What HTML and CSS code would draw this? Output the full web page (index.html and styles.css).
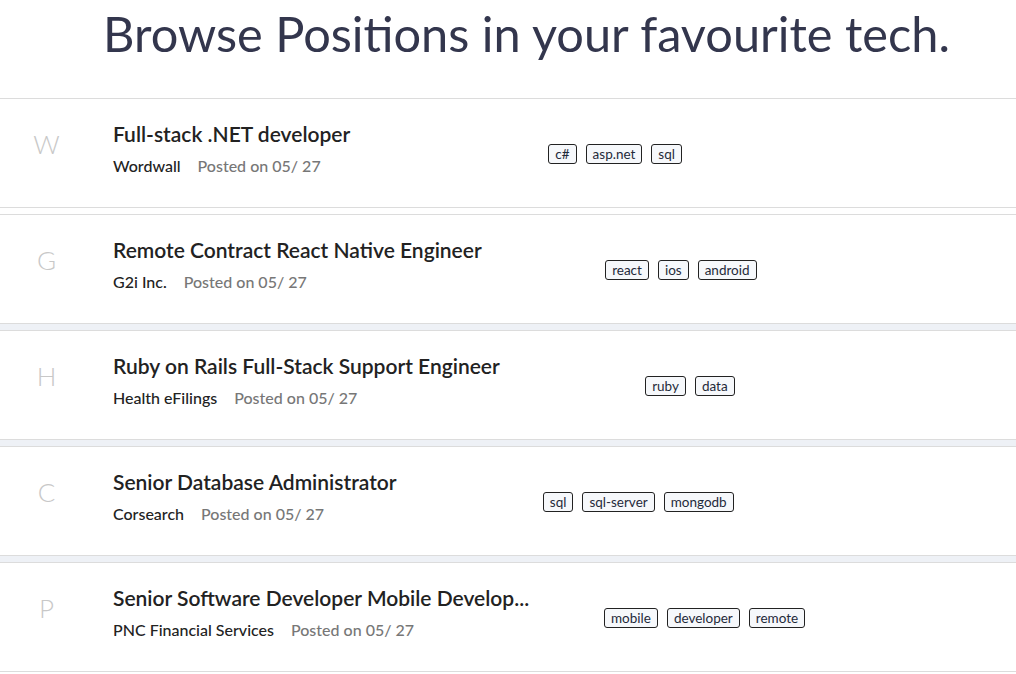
FILE: index.html
```html
<!DOCTYPE html>
<html lang="en">
<head>
<meta charset="utf-8">
<title>Browse Positions</title>
<link rel="stylesheet" href="styles.css">
</head>
<body>
<header class="hero">
  <h1 class="hero-title">Browse Positions in your favourite tech.</h1>
</header>
<main class="jobs">
  <article class="job job-first">
    <div class="job-avatar">W</div>
    <div class="job-info">
      <h2 class="job-title">Full-stack .NET developer</h2>
      <div class="job-meta"><span class="job-company">Wordwall</span><span class="job-date">Posted on 05/ 27</span></div>
    </div>
    <div class="job-tags"><span class="tag">c#</span><span class="tag">asp.net</span><span class="tag">sql</span></div>
  </article>
  <article class="job">
    <div class="job-avatar">G</div>
    <div class="job-info">
      <h2 class="job-title">Remote Contract React Native Engineer</h2>
      <div class="job-meta"><span class="job-company">G2i Inc.</span><span class="job-date">Posted on 05/ 27</span></div>
    </div>
    <div class="job-tags"><span class="tag">react</span><span class="tag">ios</span><span class="tag">android</span></div>
  </article>
  <article class="job">
    <div class="job-avatar">H</div>
    <div class="job-info">
      <h2 class="job-title">Ruby on Rails Full-Stack Support Engineer</h2>
      <div class="job-meta"><span class="job-company">Health eFilings</span><span class="job-date">Posted on 05/ 27</span></div>
    </div>
    <div class="job-tags"><span class="tag">ruby</span><span class="tag">data</span></div>
  </article>
  <article class="job">
    <div class="job-avatar">C</div>
    <div class="job-info">
      <h2 class="job-title">Senior Database Administrator</h2>
      <div class="job-meta"><span class="job-company">Corsearch</span><span class="job-date">Posted on 05/ 27</span></div>
    </div>
    <div class="job-tags"><span class="tag">sql</span><span class="tag">sql-server</span><span class="tag">mongodb</span></div>
  </article>
  <article class="job">
    <div class="job-avatar">P</div>
    <div class="job-info">
      <h2 class="job-title">Senior Software Developer Mobile Develop...</h2>
      <div class="job-meta"><span class="job-company">PNC Financial Services</span><span class="job-date">Posted on 05/ 27</span></div>
    </div>
    <div class="job-tags"><span class="tag">mobile</span><span class="tag">developer</span><span class="tag">remote</span></div>
  </article>
</main>
</body>
</html>
```
FILE: styles.css
```css
html, body {
  margin: 0;
  padding: 0;
}
body {
  background: #ffffff;
  font-family: "Lato", "Open Sans", sans-serif;
  color: #222222;
  overflow: hidden;
}
.hero {
  height: 98px;
  padding-left: 103px;
  box-sizing: border-box;
}
.hero-title {
  margin: 0;
  padding-top: 4px;
  font-size: 48.7px;
  line-height: 58px;
  font-weight: 400;
  color: #33364d;
  white-space: nowrap;
}
.jobs {
  display: flex;
  flex-direction: column;
  gap: 6px;
  background: #eef1f6;
}
.job {
  display: flex;
  align-items: flex-start;
  height: 110px;
  box-sizing: border-box;
  border-top: 1px solid #dcdcdc;
  border-bottom: 1px solid #dcdcdc;
  background: #ffffff;
  padding-right: 136px;
}
.job-first {
  box-shadow: 0 6px 0 #ffffff;
}
.job-avatar {
  width: 93px;
  margin-right: 20px;
  padding-top: 30px;
  text-align: center;
  font-size: 26px;
  line-height: 30px;
  font-weight: 300;
  color: #c8c8c8;
}
.job-info {
  padding-top: 21px;
}
.job-title {
  margin: 0;
  font-size: 21px;
  line-height: 28px;
  font-weight: 600;
  color: #222222;
  white-space: nowrap;
}
.job-meta {
  display: flex;
  gap: 17px;
  margin-top: 8px;
  font-size: 16px;
  line-height: 20px;
  font-weight: 500;
}
.job-company {
  color: #222222;
}
.job-date {
  color: #777777;
}
.job-tags {
  flex: 1;
  display: flex;
  justify-content: center;
  gap: 9px;
  padding-top: 45px;
}
.tag {
  display: inline-block;
  height: 20px;
  box-sizing: border-box;
  padding: 0 6px;
  border: 1px solid #222222;
  border-radius: 3px;
  background: #f6f8fb;
  font-size: 13.5px;
  line-height: 18px;
  color: #1f2a3a;
}
```
